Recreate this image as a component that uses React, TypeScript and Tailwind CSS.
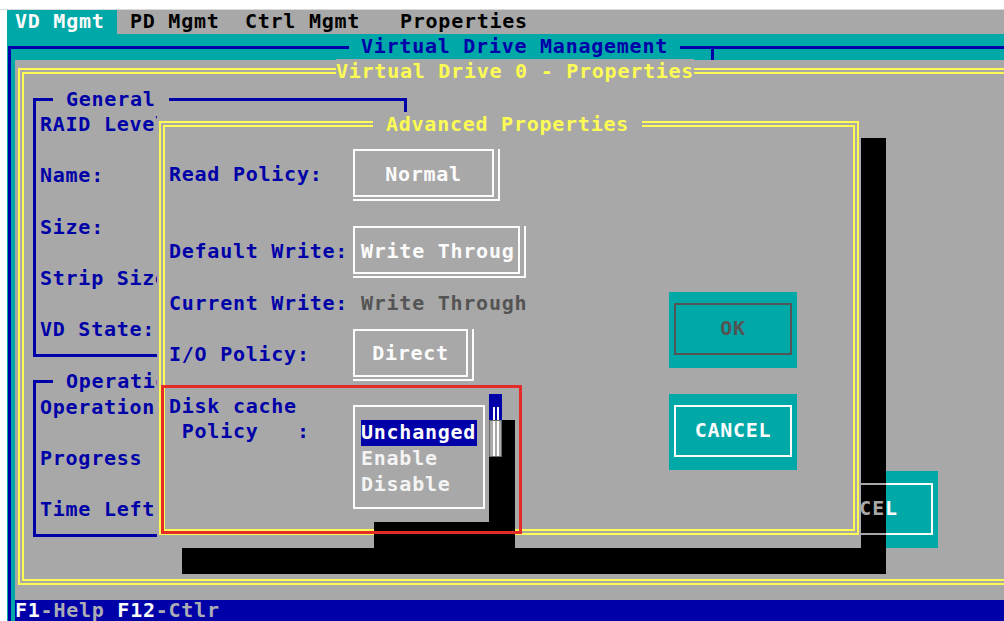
const GRAY = "bg-[#a8a8a8]";

// boxed value field with the double right/bottom edge
function ValueBox({ label, w, center = true }: { label: string; w: string; center?: boolean }) {
  return (
    <div className="border-r-2 border-b-2 border-[#fcfcfc] pr-[4px] pb-[2px]">
      <div
        className={`${w} h-[48px] pt-[3px] border-2 border-[#fcfcfc] flex items-center text-[#fcfcfc] whitespace-pre ${
          center ? "justify-center" : "pl-[6px]"
        }`}
      >
        {label}
      </div>
    </div>
  );
}

function TealButton({ label, tone }: { label: string; tone: "dim" | "lit" }) {
  const c = tone === "lit" ? "border-[#fcfcfc] text-[#fcfcfc]" : "border-[#545454] text-[#545454]";
  return (
    <div className="w-[128px] h-[76px] bg-[#00a8a8] pt-[11px] pb-[13px] px-[5px]">
      <div className={`h-full border-2 ${c} flex items-center justify-center`}>{label}</div>
    </div>
  );
}

function BlueBox({ title, rows, pt }: { title: string; rows: string[]; pt: string }) {
  return (
    <div className={`relative border-[3px] border-[#0000a8] pl-[4px] ${pt} pb-[11px] flex flex-col gap-[25.65px]`}>
      <span className={`absolute left-[17px] top-[-14px] px-[13px] ${GRAY} text-[#0000a8] whitespace-pre`}>
        {title}
      </span>
      {rows.map((r) => (
        <div key={r} className="h-[25.65px] text-[#0000a8] whitespace-pre">
          {r}
        </div>
      ))}
    </div>
  );
}

export default function App() {
  return (
    <div className="relative w-[1004px] h-[621px] overflow-hidden bg-white font-['DejaVu_Sans_Mono',monospace] font-bold text-[20px] leading-[25.65px] tracking-[0.75px]">
      <div className="h-[9px]" />
      <div className="h-px bg-[#d9d9d9]" />

      <div className="ml-[7px] flex flex-col">
        {/* menu bar */}
        <div className={`flex h-[24px] items-center ${GRAY} text-black whitespace-pre`}>
          <div className="w-[110px] h-full bg-[#00a8a8] text-[#fcfcfc] pl-[8px] flex items-center">VD Mgmt</div>
          <div className="w-[115px] ml-[13px]">PD Mgmt</div>
          <div className="w-[155px]">Ctrl Mgmt</div>
          <div>Properties</div>
        </div>

        {/* title row */}
        <div className="flex h-[26px] bg-[#00a8a8]">
          <div className="shrink-0 ml-[1px] mt-[12px] w-[341px] border-l-[3px] border-t-[3px] border-[#0000a8]" />
          <div className="shrink-0 px-[12px] self-center text-[#0000a8] whitespace-pre">Virtual Drive Management</div>
          <div className="flex-1 mt-[12px]">
            <div className="h-[3px] bg-[#0000a8]" />
            <div className="ml-[31px] w-[3px] h-[11px] bg-[#0000a8]" />
          </div>
        </div>

        <div className="flex">
          <div className="shrink-0 w-[8px] bg-[#00a8a8] pl-[1px]">
            <div className="w-[3px] h-full bg-[#0000a8]" />
          </div>

          <div className="flex-1 min-w-0 flex flex-col">
            <div className={`h-[540px] ${GRAY} pl-[3px] pt-[8px]`}>
              <div className="relative h-[517px] w-[1100px] border-[6px] border-r-0 border-double border-[#fcfc54]">
                <span className={`absolute left-[312px] top-[-15.4px] ${GRAY} text-[#fcfc54] whitespace-pre`}>
                  Virtual Drive 0 - Properties
                </span>

                <div className="flex pl-[9px] pt-[23.5px]">
                  <div className="shrink-0 flex flex-col w-[374px] gap-[23px]">
                    <BlueBox
                      title="General"
                      pt="pt-[11.5px]"
                      rows={["RAID Level:", "Name:", "Size:", "Strip Size:", "VD State:"]}
                    />
                    <BlueBox title="Operations" pt="pt-[11.9px]" rows={["Operation:", "Progress", "Time Left"]} />
                  </div>

                  <div className="shrink-0 ml-[389px] mt-[373.5px] w-[142px] h-[77px] bg-[#00a8a8] pt-[12px] pb-[13px] px-[5px]">
                    <div className="h-full border-2 border-[#fcfcfc] pl-[18px] flex items-center text-[#fcfcfc]">
                      CANCEL
                    </div>
                  </div>
                </div>
              </div>
            </div>

            {/* status line */}
            <div className="h-[21px] leading-[21px] bg-[#0000a8] whitespace-pre">
              <span className="text-[#fcfcfc]">F1</span>
              <span className="text-[#acacb4]">-Help </span>
              <span className="text-[#fcfcfc]">F12</span>
              <span className="text-[#acacb4]">-Ctlr</span>
            </div>
          </div>
        </div>
      </div>

      {/* dialog shadow; the button it covers shows through in gray */}
      <div className="absolute left-[182px] top-[137.6px] w-[704px] h-[436px] bg-black overflow-hidden">
        <div className="absolute left-[679px] top-[333.4px] w-[25px] h-[77px] overflow-hidden">
          <div className="absolute left-[-60px] top-[12px] w-[132px] h-[52px] border-2 border-[#a8a8a8] pl-[18px] flex items-center text-[#a8a8a8]">
            CANCEL
          </div>
        </div>
      </div>

      {/* Advanced Properties dialog */}
      <div className={`absolute left-[157px] top-[112px] w-[704px] h-[436px] ${GRAY} pt-[9px] px-[2px] pb-[13px]`}>
        <div className="relative h-full border-[6px] border-double border-[#fcfc54]">
          <span className={`absolute left-[208px] top-[-15.4px] px-[13px] ${GRAY} text-[#fcfc54] whitespace-pre`}>
            Advanced Properties
          </span>

          <div className="flex pl-[4px]">
            <div className="w-[500px] flex flex-col text-[#0000a8]">
              <div className="mt-[22px] flex items-center">
                <div className="w-[184px]">Read Policy:</div>
                <ValueBox label="Normal" w="w-[141px]" />
              </div>
              <div className="mt-[25px] flex items-center">
                <div className="w-[184px]">Default Write:</div>
                <ValueBox label="Write Throug" w="w-[167px]" center={false} />
              </div>
              <div className="mt-[13px] flex h-[25.65px] whitespace-pre">
                <div className="w-[192px]">Current Write:</div>
                <div className="text-[#545454]">Write Through</div>
              </div>
              <div className="mt-[12px] flex items-center">
                <div className="w-[184px]">I/O Policy:</div>
                <ValueBox label="Direct" w="w-[115px]" />
              </div>
              <div className="mt-[13px] h-[25.65px] whitespace-pre">Disk cache</div>
              <div className="h-[25.65px] whitespace-pre"> Policy   :</div>
            </div>

            <div className="mt-[165px] flex flex-col gap-[26px]">
              <TealButton label="OK" tone="dim" />
              <TealButton label="CANCEL" tone="lit" />
            </div>
          </div>
        </div>
      </div>

      {/* drop-down list */}
      <div className="absolute left-[374px] top-[420px] w-[141px] h-[128px] bg-black" />
      <div className={`absolute left-[349px] top-[394px] w-[140px] h-[128px] ${GRAY} pt-[11px] px-[4px] pb-[13px]`}>
        <div className="h-full border-2 border-[#fcfcfc] pt-[13.3px] pl-[6px]">
          <div className="w-[116px] h-[25.65px] bg-[#0000a8] text-[#fcfcfc]">Unchanged</div>
          <div className="h-[25.65px] text-[#f4f4f4]">Enable</div>
          <div className="h-[25.65px] text-[#f4f4f4]">Disable</div>
        </div>
      </div>
      <div className="absolute left-[489px] top-[394px] w-[13px] flex flex-col">
        <div className="h-[26px] bg-[#0000a8] pt-[13px] flex justify-center gap-[2px]">
          <div className="w-[2px] bg-[#fcfcfc]" />
          <div className="w-[2px] bg-[#fcfcfc]" />
        </div>
        <div className={`h-[37px] ${GRAY} border border-[#6a6a6a] flex justify-center gap-[2px]`}>
          <div className="w-[2px] bg-[#fcfcfc]" />
          <div className="w-[2px] bg-[#fcfcfc]" />
        </div>
      </div>

      <div className="absolute left-[161px] top-[385px] w-[361px] h-[149px] border-[3px] border-[#e52a2a]" />
    </div>
  );
}
